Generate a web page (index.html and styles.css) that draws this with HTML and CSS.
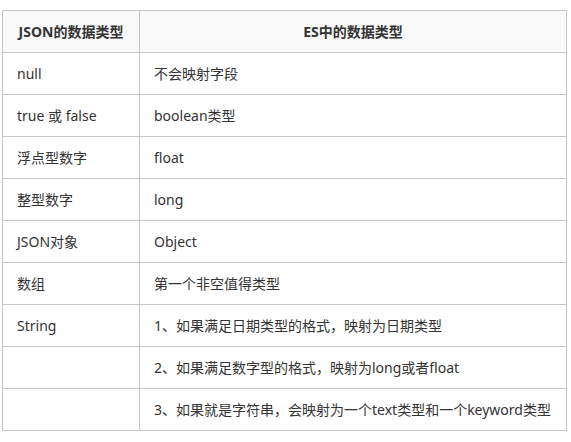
FILE: index.html
```html
<!DOCTYPE html>
<html lang="zh">
<head>
<meta charset="utf-8">
<link rel="stylesheet" href="styles.css">
</head>
<body>
<table class="types">
  <thead>
    <tr><th class="c1">JSON的数据类型</th><th class="c2">ES中的数据类型</th></tr>
  </thead>
  <tbody>
    <tr><td>null</td><td>不会映射字段</td></tr>
    <tr><td>true 或 false</td><td>boolean类型</td></tr>
    <tr><td>浮点型数字</td><td>float</td></tr>
    <tr><td>整型数字</td><td>long</td></tr>
    <tr><td>JSON对象</td><td>Object</td></tr>
    <tr><td>数组</td><td>第一个非空值得类型</td></tr>
    <tr><td>String</td><td>1、如果满足日期类型的格式，映射为日期类型</td></tr>
    <tr><td></td><td>2、如果满足数字型的格式，映射为long或者float</td></tr>
    <tr><td></td><td>3、如果就是字符串，会映射为一个text类型和一个keyword类型</td></tr>
  </tbody>
</table>
</body>
</html>
```
FILE: styles.css
```css
html, body {
  margin: 0;
  padding: 0;
  background: #fff;
}
body {
  padding: 10px 0 0 2px;
  font-family: "Noto Sans", "Noto Sans CJK SC", sans-serif;
  font-size: 14px;
  color: #333;
}
.types {
  border-collapse: collapse;
  width: 565px;
  table-layout: fixed;
}
.types th, .types td {
  border: 1px solid #c6c6c6;
  height: 42px;
  padding: 0 14px;
  box-sizing: border-box;
  white-space: nowrap;
  line-height: 20px;
}
.types th {
  background: #f9f9f9;
  font-weight: bold;
  text-align: center;
}
.types td {
  text-align: left;
}
.c1 { width: 137px; }
```
